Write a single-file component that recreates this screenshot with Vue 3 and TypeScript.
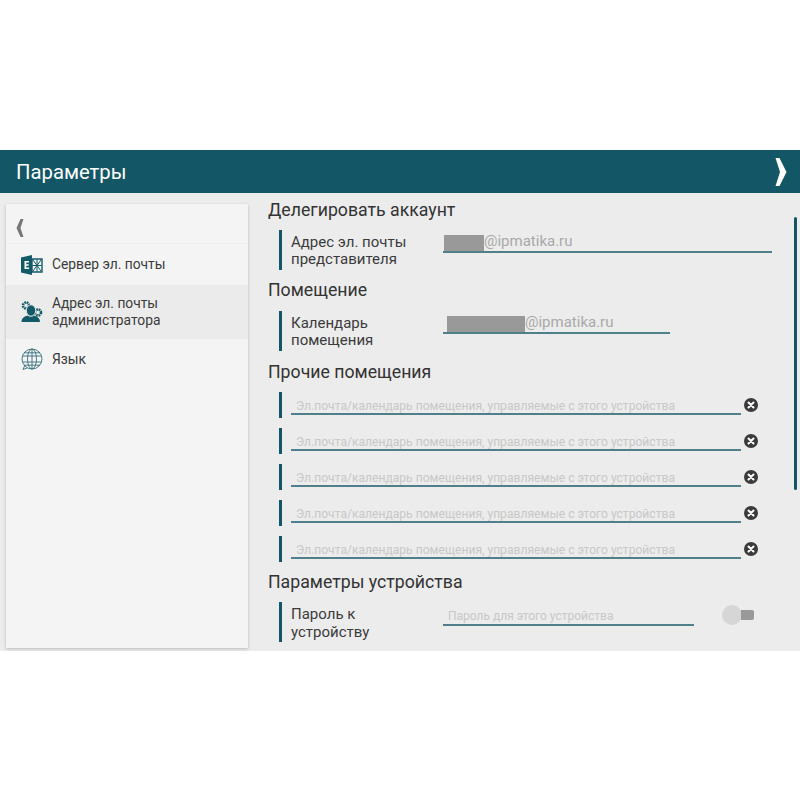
<script setup lang="ts">
const rooms: number[] = [1, 2, 3, 4, 5];
const ph = "Эл.почта/календарь помещения, управляемые с этого устройства";
</script>

<template>
  <div class="page">
    <header class="top">
      <span class="title">Параметры</span>
      <svg class="chev" width="12" height="28" viewBox="0 0 12 28">
        <path d="M.5 0h4l7 14-7 14h-4l4.500-14z" fill="#fff" />
      </svg>
    </header>
    <div class="body">
      <aside class="side">
        <div class="back">
          <svg width="8" height="18" viewBox="0 0 8 18">
            <path d="M7.500 0H4.500L.5 9l4 9h3L4.500 9z" fill="#777" />
          </svg>
        </div>
        <div class="item first">
          <svg class="ico" width="22" height="22" viewBox="0 0 22 22">
            <path d="M0 3.500 11 1v20L0 18.500z" fill="#135a68" />
            <path d="M11 5h10v13H11z" fill="none" stroke="#135a68" stroke-width="1.400" />
            <path d="M12 6l8 11M20 6l-8 11M16 5.500v12M11.500 11.500h9" stroke="#135a68" stroke-width="1" />
            <path d="M3.500 7h4.500v1.600H5.300v1.700h2.400v1.500H5.300v1.700h2.800V15H3.500z" fill="#fff" />
          </svg>
          <span>Сервер эл. почты</span>
        </div>
        <div class="item active">
          <svg class="ico" width="22" height="22" viewBox="0 0 22 22">
            <circle cx="5" cy="4.500" r="3" fill="none" stroke="#135a68" stroke-width="2.600" stroke-dasharray="1.700 .7" />
            <circle cx="17" cy="11.500" r="3" fill="none" stroke="#135a68" stroke-width="2.600" stroke-dasharray="1.700 .7" />
            <ellipse cx="10" cy="9.500" rx="4.700" ry="5.700" fill="#135a68" stroke="#ebebeb" stroke-width="1" />
            <path d="M.5 21c0-4.500 3.500-5.500 6-6.500 2 1.600 4.500 1.600 6.500 0 2.500 1 6 2 6 6.500z" fill="#135a68" />
          </svg>
          <span>Адрес эл. почты<br />администратора</span>
        </div>
        <div class="item last">
          <svg class="ico" width="22" height="22" viewBox="0 0 22 22" fill="none" stroke="#35707b" stroke-width=".9">
            <circle cx="11" cy="11" r="10" />
            <ellipse cx="11" cy="11" rx="4.500" ry="10" />
            <path d="M11 1v20M1.500 8h19M1.500 14h19M3 4.800h16M3 17.200h16" />
            <path d="M3.500 18l-1.500 3.500 4-1.500" />
          </svg>
          <span>Язык</span>
        </div>
      </aside>

      <main class="main">
        <h2>Делегировать аккаунт</h2>
        <div class="row">
          <label>Адрес эл. почты<br />представителя</label>
          <div class="field wide">
            <i class="mask m1"></i><span class="val">@ipmatika.ru</span>
          </div>
        </div>

        <h2>Помещение</h2>
        <div class="row row2">
          <label>Календарь<br />помещения</label>
          <div class="field mid">
            <i class="mask m2"></i><span class="val">@ipmatika.ru</span>
          </div>
        </div>

        <h2 class="h-other">Прочие помещения</h2>
        <div class="room" v-for="r in rooms" :key="r">
          <div class="roomfield"><span class="ph">{{ ph }}</span></div>
          <svg class="x" width="14" height="14" viewBox="0 0 14 14">
            <circle cx="7" cy="7" r="7" fill="#3a3a3a" />
            <path d="M4.500 4.500l5 5M9.500 4.500l-5 5" stroke="#fff" stroke-width="2" stroke-linecap="round" />
          </svg>
        </div>

        <h2 class="h-dev">Параметры устройства</h2>
        <div class="row">
          <label class="tall">Пароль к<br />устройству</label>
          <div class="field pass"><span class="ph small">Пароль для этого устройства</span></div>
          <div class="toggle"><b></b><em></em></div>
        </div>
      </main>
      <div class="scroll"></div>
    </div>
  </div>
</template>

<style>
html, body { background: #fff; margin: 0; }
</style>

<style scoped>
.page {
  width: 800px;
  padding-top: 150px;
  font-family: Roboto, "Noto Sans", sans-serif;
  color: #333;
}
.top {
  height: 43px;
  background: #135766;
  display: flex;
  align-items: center;
  justify-content: space-between;
  padding: 0 13px 0 16px;
  box-sizing: border-box;
  color: #fff;
}
.title { font-size: 20.300px; }
.body {
  position: relative;
  height: 458px;
  background: #ececec;
  display: flex;
  overflow: hidden;
}
.side {
  width: 242px;
  height: 444px;
  margin: 11px 0 0 6px;
  background: #f4f4f4;
  box-shadow: 0 1px 3px rgba(0, 0, 0, .22);
  flex: none;
}
.back {
  height: 40px;
  padding: 15px 0 0 10px;
  box-sizing: border-box;
  border-bottom: 1px solid #eee;
}
.item {
  display: flex;
  align-items: center;
  gap: 9px;
  padding-left: 15px;
  font-size: 13.800px;
  line-height: 17px;
  height: 41px;
  color: #3b3b3b;
}
.ico { flex: none; }
.active { height: 54px; background: #ebebeb; }
.last { height: 40px; }
.main {
  margin-left: 20px;
  width: 510px;
  padding-top: 5px;
}
h2 {
  margin: 0;
  font-weight: 400;
  font-size: 17.700px;
  line-height: 24px;
  color: #333;
}
.row {
  display: flex;
  height: 40px;
  margin: 8px 0 8px 11px;
  border-left: 3px solid #135766;
  padding-left: 9px;
  position: relative;
}
.row2 { margin-top: 9px; }
label {
  width: 152px;
  flex: none;
  font-size: 15px;
  line-height: 17px;
  padding-top: 4px;
  color: #3b3b3b;
}
label.tall { line-height: 18px; padding-top: 3px; }
.field {
  height: 21px;
  border-bottom: 2px solid #4f7f8a;
  display: flex;
  align-items: flex-end;
}
.wide { width: 329px; }
.mid { width: 227px; }
.pass { width: 251px; height: 17px; margin-top: 5px; align-items: center; }
.mask { display: block; background: #999; height: 16px; flex: none; }
.m1 { width: 40px; margin-left: 1px; }
.m2 { width: 78px; margin-left: 4px; }
.val { font-size: 15px; line-height: 20px; color: #a9a9a9; }
.h-other { margin-top: 9px; }
.room {
  display: flex;
  height: 36px;
  margin-left: 11px;
  position: relative;
}
.room::before {
  content: "";
  position: absolute;
  left: 0;
  top: 8px;
  height: 26px;
  width: 3px;
  background: #135766;
}
.roomfield {
  width: 450px;
  margin-left: 12px;
  height: 23px;
  margin-top: 8px;
  box-sizing: border-box;
  border-bottom: 2px solid #4f7f8a;
  padding: 4px 0 0 5px;
  line-height: 18px;
}
.ph { font-size: 12.100px; color: #c8c8c8; white-space: nowrap; }
.small { padding-left: 5px; font-size: 12px; }
.x { margin: 14px 0 0 3px; flex: none; }
.h-dev { margin-top: 6px; }
.toggle {
  position: absolute;
  left: 440px;
  top: 3px;
  width: 34px;
  height: 20px;
}
.toggle b {
  position: absolute;
  left: 0;
  top: 0;
  width: 20px;
  height: 20px;
  border-radius: 50%;
  background: #d6d6d6;
}
.toggle em {
  position: absolute;
  left: 19px;
  top: 5px;
  width: 13px;
  height: 10px;
  border-radius: 0 2px 2px 0;
  background: #999;
}
.scroll {
  position: absolute;
  left: 794px;
  top: 24px;
  width: 3px;
  height: 273px;
  border-radius: 2px;
  background: #135766;
}
</style>
